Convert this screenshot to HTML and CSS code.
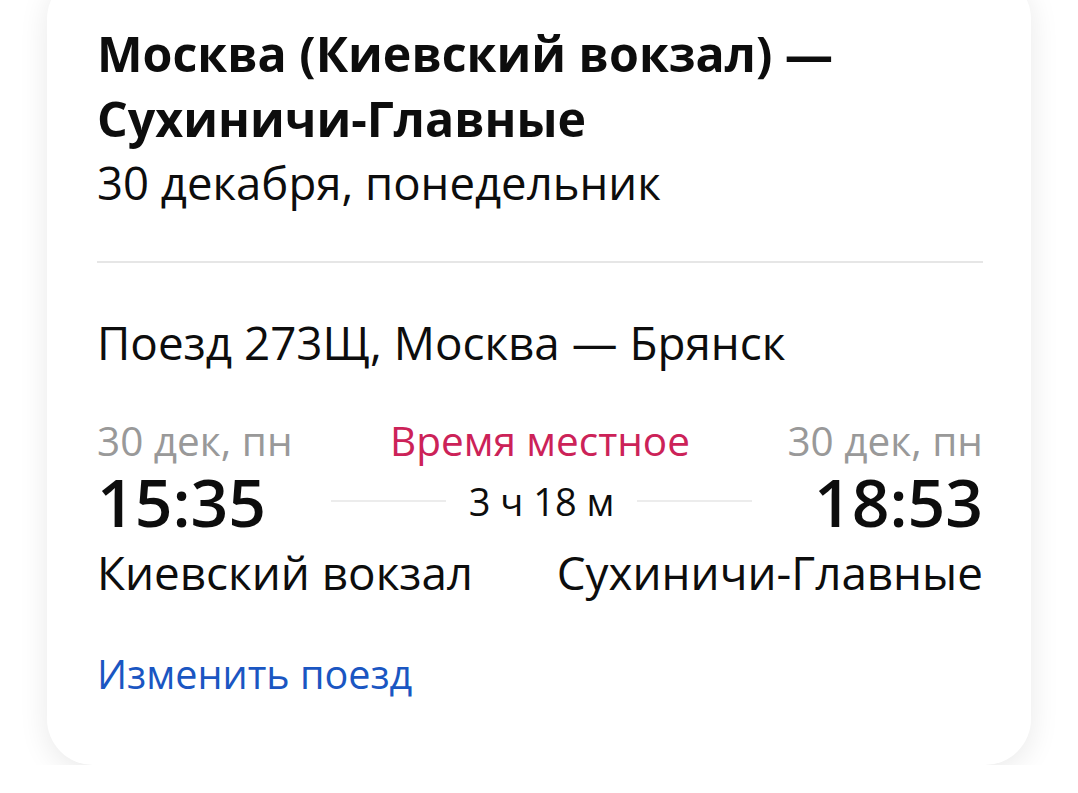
FILE: index.html
```html
<!DOCTYPE html>
<html lang="ru">
<head>
    <meta charset="UTF-8">
    <meta name="viewport" content="width=device-width, initial-scale=1.0">
    <title>Москва — Сухиничи-Главные</title>
    <link rel="stylesheet" href="styles.css">
</head>
<body>
    <div class="card">
        <!-- Маршрут -->
        <h1 class="route">Москва (Киевский вокзал) —<br>Сухиничи-Главные</h1>
        <div class="route-date">30 декабря, понедельник</div>

        <div class="divider"></div>

        <!-- Поезд -->
        <div class="train">Поезд 273Щ, Москва — Брянск</div>

        <div class="row dates">
            <span class="date">30 дек, пн</span>
            <span class="local">Время местное</span>
            <span class="date">30 дек, пн</span>
        </div>

        <div class="row times">
            <span class="time">15:35</span>
            <div class="duration">
                <span class="line"></span>
                <span class="duration-text">3 ч 18 м</span>
                <span class="line"></span>
            </div>
            <span class="time">18:53</span>
        </div>

        <div class="row stations">
            <span>Киевский вокзал</span>
            <span>Сухиничи-Главные</span>
        </div>

        <a class="change" href="#">Изменить поезд</a>
    </div>
</body>
</html>
```

FILE: styles.css
```css
/* Reset */
* {
    margin: 0;
    padding: 0;
    box-sizing: border-box;
}

body {
    font-family: "Open Sans", "Noto Sans", sans-serif;
    background: #fff;
    color: #0d0d0d;
    overflow: hidden;
}

.card {
    margin: -27px 47px 0;
    padding: 48px 48px 63px 50px;
    background: #fff;
    border-radius: 46px;
    box-shadow: 0 6px 30px rgba(0, 0, 0, 0.09);
}

.route {
    font-size: 48.3px;
    font-weight: 700;
    line-height: 65px;
}

.route-date {
    font-size: 45.5px;
    line-height: 62px;
}

.divider {
    height: 2px;
    margin-top: 48px;
    background: #e6e6e6;
}

.train {
    margin-top: 51px;
    font-size: 45.8px;
    line-height: 56px;
}

.row {
    display: flex;
    justify-content: space-between;
    align-items: center;
}

.dates {
    margin-top: 46px;
    font-size: 40.5px;
    line-height: 50px;
}

.date {
    color: #999;
}

.local {
    color: #cc2258;
}

.times {
    line-height: 70px;
}

.time {
    font-size: 66px;
    font-weight: 600;
}

.duration {
    flex: 1;
    display: flex;
    align-items: center;
    gap: 23px;
    padding: 0 62px 0 65px;
    font-size: 38px;
}

.line {
    flex: 1;
    height: 2px;
    background: #ececec;
}

.stations {
    margin-top: 8px;
    font-size: 45.8px;
    line-height: 56px;
}

.change {
    display: block;
    margin-top: 46px;
    font-size: 39.6px;
    line-height: 56px;
    color: #1a56c2;
    text-decoration: none;
}
```
